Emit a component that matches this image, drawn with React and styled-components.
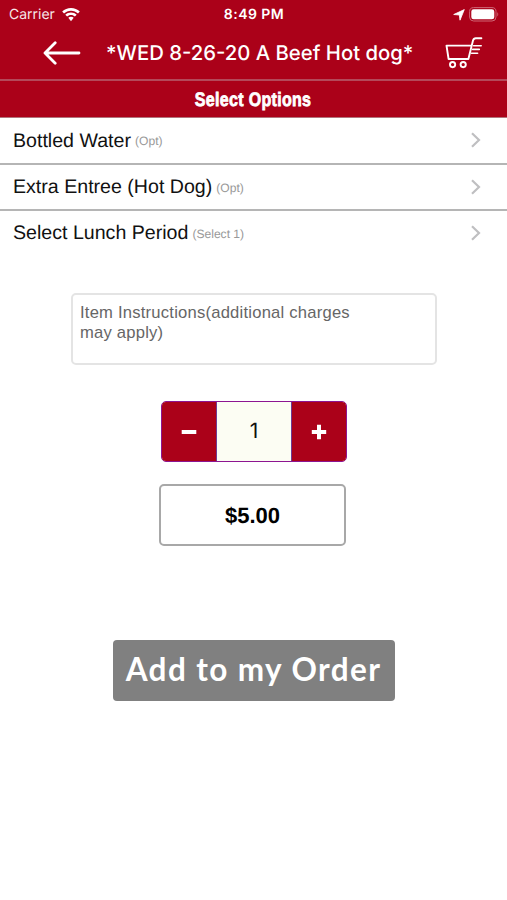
import { useState } from "react"
import styled, { createGlobalStyle } from "styled-components"

const OPTIONS = [
    { id: 1, name: "Bottled Water", hint: "(Opt)" },
    { id: 2, name: "Extra Entree (Hot Dog)", hint: "(Opt)" },
    { id: 3, name: "Select Lunch Period", hint: "(Select 1)" },
]

const PRICE = 5

function StatusBar() {
    return(
        <Status>
            <StatusLeft>
                <Carrier>Carrier</Carrier>
                <svg width="18" height="14" viewBox="0 0 18 14" fill="#fff">
                    <path d="M9 0.1C12.4 0.1 15.5 1.4 17.8 3.6L16 5.5C14.2 3.8 11.7 2.7 9 2.7S3.8 3.8 2 5.5L0.2 3.6C2.5 1.4 5.6 0.1 9 0.1Z" />
                    <path d="M9 4.5C11.2 4.5 13.2 5.4 14.7 6.8L12.9 8.6C11.9 7.6 10.5 7 9 7S6.1 7.6 5.1 8.6L3.3 6.8C4.8 5.4 6.8 4.5 9 4.5Z" />
                    <path d="M9 8.7C10.1 8.7 11 9.1 11.7 9.8L9 13.3L6.3 9.8C7 9.1 7.9 8.7 9 8.7Z" />
                </svg>
            </StatusLeft>
            <Clock>8:49 PM</Clock>
            <StatusRight>
                <svg width="12" height="12" viewBox="0 0 12 12" fill="#fff" stroke="#fff" strokeWidth="0.8" strokeLinejoin="round">
                    <path d="M11.3 0.6L7 11.2L6.3 6L0.7 5.5Z" />
                </svg>
                <svg width="30" height="15" viewBox="0 0 30 15">
                    <rect x="0.6" y="0.6" width="26.4" height="13.4" rx="4" fill="none" stroke="#cf6675" strokeWidth="1" />
                    <rect x="2.3" y="2.3" width="23" height="10" rx="2.4" fill="#fff" />
                    <path d="M28.3 5.2C29.6 5.8 29.6 8.8 28.3 9.4Z" fill="#cf6675" />
                </svg>
            </StatusRight>
        </Status>
    )
}

function CartIcon() {
    return(
        <svg width="38" height="32" viewBox="0 0 38 32" fill="none" stroke="#fff" strokeWidth="1.9" strokeLinecap="round" strokeLinejoin="round">
            <path d="M25.6 8.6H1.5L3.6 22H23.4L28 3.6C28.4 2 29.2 1.2 30.8 1.2H36.4" />
            <path d="M28.6 8.7H36.2M27.6 12.4H34.3M26.4 16.2H32.6" strokeWidth="1.6" />
            <circle cx="7.6" cy="27.6" r="2.6" />
            <circle cx="18.2" cy="27.6" r="2.6" />
        </svg>
    )
}

function App() {
    const [count, setCount] = useState(1);

    return(
        <Page>
            <GlobalStyle />
            <Header>
                <StatusBar />
                <NavBar>
                    <IconButton aria-label="Back">
                        <svg width="38" height="24" viewBox="0 0 38 24" fill="none" stroke="#fff" strokeWidth="2.8" strokeLinecap="round" strokeLinejoin="round">
                            <path d="M12.2 1.8L2 12L12.2 22.2M2 12H36" />
                        </svg>
                    </IconButton>
                    <Title>*WED 8-26-20 A Beef Hot dog*</Title>
                    <IconButton aria-label="Cart">
                        <CartIcon />
                    </IconButton>
                </NavBar>
                <SectionTitle><span>Select Options</span></SectionTitle>
            </Header>
            <OptionList>
                {OPTIONS.map((option) => {
                    return(
                        <OptionRow key={option.id}>
                            <OptionName>{option.name}</OptionName>
                            <OptionHint>{option.hint}</OptionHint>
                            <svg width="10" height="16" viewBox="0 0 10 16" fill="none" stroke="#bfbfc1" strokeWidth="2.2">
                                <path d="M1 1.2L8 8L1 14.8" />
                            </svg>
                        </OptionRow>
                    )
                })}
            </OptionList>
            <Form>
                <Instructions placeholder="Item Instructions(additional charges may apply)" />
                <Stepper>
                    <StepButton aria-label="Decrease" onClick={() => setCount(Math.max(1, count - 1))}>
                        <svg width="16" height="16" viewBox="0 0 16 16" stroke="#fff" strokeWidth="4">
                            <path d="M0.7 8H15.3" />
                        </svg>
                    </StepButton>
                    <Count>{count}</Count>
                    <StepButton aria-label="Increase" onClick={() => setCount(count + 1)}>
                        <svg width="16" height="16" viewBox="0 0 16 16" stroke="#fff" strokeWidth="4">
                            <path d="M0.8 8H15.2M8 0.8V15.2" />
                        </svg>
                    </StepButton>
                </Stepper>
                <Price>${(PRICE * count).toFixed(2)}</Price>
                <AddButton>Add to my Order</AddButton>
            </Form>
        </Page>
    )
}

export default App

const GlobalStyle = createGlobalStyle`
    *{
        box-sizing: border-box;
    }
    body{
        margin: 0;
        background-color: #fff;
        font-family: "Liberation Sans", Arial, sans-serif;
        text-rendering: geometricPrecision;
    }
    button{
        border: 0;
        padding: 0;
        background: none;
        font: inherit;
    }
    svg{
        display: block;
        flex-shrink: 0;
    }
`

const Page = styled.div`
    width: 100%;
    height: 900px;
    overflow: hidden;
`

const Header = styled.header`
    background-color: #ab0119;
    color: #fff;
    border-bottom: 1px solid #b0757c;
`

const Status = styled.div`
    display: grid;
    grid-template-columns: 1fr auto 1fr;
    align-items: center;
    height: 27px;
    padding: 0 8px 0 9px;
    font-family: Inter, "Liberation Sans", sans-serif;
    font-size: 14px;
    line-height: 29px;
`

const StatusLeft = styled.div`
    display: flex;
    align-items: center;
    gap: 6px;
`

const StatusRight = styled(StatusLeft)`
    justify-content: flex-end;
    gap: 4px;
`

const Carrier = styled.span`
    width: 47px;
    opacity: 0.9;
    white-space: nowrap;
`

const Clock = styled.span`
    font-weight: 600;
    letter-spacing: 0.45px;
`

const NavBar = styled.nav`
    display: flex;
    align-items: center;
    height: 54px;
    padding: 0 24px 1px 43px;
    border-bottom: 2px solid #b4495a;
`

const IconButton = styled.button`
    cursor: pointer;
`

const Title = styled.h1`
    margin: 0 auto 0 25px;
    padding-top: 1px;
    font-family: Inter, "Liberation Sans", sans-serif;
    font-size: 20.3px;
    font-weight: 500;
    line-height: 26px;
    white-space: nowrap;
`

const SectionTitle = styled.h2`
    display: flex;
    align-items: center;
    justify-content: center;
    height: 36px;
    margin: 0;
    padding-top: 2px;
    font-size: 19.5px;
    font-weight: 700;
    letter-spacing: 0.4px;
    -webkit-text-stroke: 0.8px #fff;

    span{
        transform: scaleX(0.82);
    }
`

const OptionList = styled.div`
    display: flex;
    flex-direction: column;
`

const OptionRow = styled.div`
    display: flex;
    align-items: center;
    height: 46px;
    padding: 0 26px 0 13px;
    border-bottom: 2px solid #b5b5b5;

    &:first-child{
        height: 47px;
    }
    &:last-child{
        height: 44px;
        border-bottom: 0;
    }
    svg{
        margin: 0 0 1px auto;
    }
`

const OptionName = styled.span`
    padding-top: 1px;
    font-size: 19.6px;
    color: #111;
`

const OptionHint = styled.span`
    margin-left: 4px;
    padding-top: 1px;
    font-size: 12.1px;
    color: #999;
`

const Form = styled.div`
    display: flex;
    flex-direction: column;
    align-items: center;
    padding-top: 38px;
`

const Instructions = styled.textarea`
    width: 366px;
    height: 72px;
    margin-left: 1px;
    padding: 8px 70px 0 7px;
    border: 2px solid #e4e4e4;
    border-radius: 5px;
    outline: none;
    resize: none;
    overflow: hidden;
    font-family: "Liberation Sans", Arial, sans-serif;
    font-size: 16.6px;
    letter-spacing: 0.22px;
    line-height: 20px;

    &::placeholder{
        color: #666;
    }
`

const Stepper = styled.div`
    display: flex;
    width: 186px;
    height: 61px;
    margin: 36px 0 0 1px;
    border: 1px solid #8d1591;
    border-radius: 5px;
    overflow: hidden;
`

const StepButton = styled.button`
    display: flex;
    align-items: center;
    justify-content: center;
    width: 54px;
    background-color: #ab0119;
    cursor: pointer;
`

const Count = styled.div`
    flex: 1;
    border: solid #6d3b94;
    border-width: 0 1px;
    background-color: #fcfdf3;
    color: #111;
    font-family: Inter, "Liberation Sans", sans-serif;
    font-size: 21px;
    line-height: 60px;
    text-align: center;
`

const Price = styled.div`
    width: 187px;
    height: 62px;
    margin: 22px 2px 0 0;
    border: 2px solid #a8a8a8;
    border-radius: 5px;
    color: #000;
    font-size: 22px;
    font-weight: 700;
    line-height: 59px;
    text-align: center;
`

const AddButton = styled.button`
    width: 282px;
    height: 61px;
    margin-top: 94px;
    padding-bottom: 3px;
    border-radius: 4px;
    background-color: #808080;
    color: #fff;
    font-family: Lato, "Open Sans", sans-serif;
    font-size: 31.5px;
    font-weight: 700;
    letter-spacing: 1.4px;
    white-space: nowrap;
    cursor: pointer;
`
